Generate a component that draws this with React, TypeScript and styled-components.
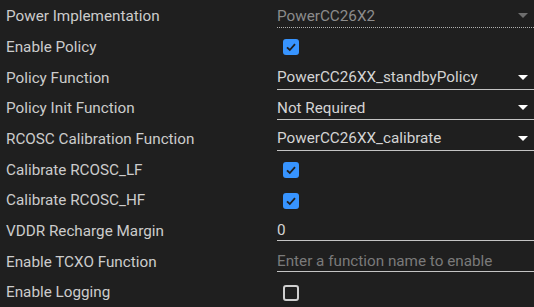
import React from "react";
import styled, { createGlobalStyle } from "styled-components";

const GlobalStyle = createGlobalStyle`
	html, body {
		margin: 0;
		padding: 0;
		background: #1f1f1f;
		overflow: hidden;
	}
	body {
		font-family: Roboto, "Liberation Sans", sans-serif;
	}
`;

const Panel = styled.div`
	width: 534px;
	height: 307px;
	padding-top: 1px;
	box-sizing: border-box;
	background: #1f1f1f;
	color: #cccccc;
`;

const Row = styled.div`
	display: grid;
	grid-template-columns: 277px 1fr;
	align-items: center;
	height: 30.67px;
`;

const Label = styled.div`
	padding-left: 6px;
	font-size: 15.25px;
	white-space: nowrap;
`;

const Select = styled.div<{ $disabled?: boolean }>`
	display: flex;
	align-items: center;
	justify-content: space-between;
	height: 24px;
	box-sizing: border-box;
	padding-right: 6px;
	border-bottom: 1px ${(p) => (p.$disabled ? "dotted #b0b0b0" : "solid #c4c4c4")};
	font-size: 15.25px;
	color: ${(p) => (p.$disabled ? "#8c8c8c" : "#d4d4d4")};
`;

const Arrow = styled.span<{ $disabled?: boolean }>`
	width: 0;
	height: 0;
	border-left: 5px solid transparent;
	border-right: 5px solid transparent;
	border-top: 5px solid ${(p) => (p.$disabled ? "#6e6e6e" : "#ffffff")};
`;

const TextInput = styled.input`
	display: block;
	width: 100%;
	height: 20px;
	box-sizing: border-box;
	margin: 0;
	padding: 0;
	background: transparent;
	border: none;
	border-bottom: 1px solid #c4c4c4;
	outline: none;
	font-family: Roboto, "Liberation Sans", sans-serif;
	font-size: 15.25px;
	color: #d4d4d4;

	&::placeholder {
		color: #7a7a7a;
	}
`;

const Box = styled.span<{ $checked?: boolean }>`
	display: flex;
	align-items: center;
	justify-content: center;
	width: 16px;
	height: 16px;
	margin-left: 6px;
	margin-top: 1px;
	box-sizing: border-box;
	border-radius: 3px;
	background: ${(p) => (p.$checked ? "#3794ff" : "transparent")};
	border: ${(p) => (p.$checked ? "none" : "2px solid #cfcfcf")};
`;

const Checkbox = ({ checked }: { checked?: boolean }) => (
	<Box $checked={checked}>
		{checked && (
			<svg width="12" height="12" viewBox="0 0 12 12">
				<path d="M2 6.3 L4.8 9 L10 3.2" fill="none" stroke="#1f1f1f" strokeWidth="1.8" />
			</svg>
		)}
	</Box>
);

type Field =
	| { label: string; kind: "select"; value: string; disabled?: boolean }
	| { label: string; kind: "check"; checked: boolean }
	| { label: string; kind: "text"; value?: string; placeholder?: string };

const fields: Field[] = [
	{ label: "Power Implementation", kind: "select", value: "PowerCC26X2", disabled: true },
	{ label: "Enable Policy", kind: "check", checked: true },
	{ label: "Policy Function", kind: "select", value: "PowerCC26XX_standbyPolicy" },
	{ label: "Policy Init Function", kind: "select", value: "Not Required" },
	{ label: "RCOSC Calibration Function", kind: "select", value: "PowerCC26XX_calibrate" },
	{ label: "Calibrate RCOSC_LF", kind: "check", checked: true },
	{ label: "Calibrate RCOSC_HF", kind: "check", checked: true },
	{ label: "VDDR Recharge Margin", kind: "text", value: "0" },
	{ label: "Enable TCXO Function", kind: "text", placeholder: "Enter a function name to enable" },
	{ label: "Enable Logging", kind: "check", checked: false },
];

const App: React.FC = () => {
	return (
		<>
			<GlobalStyle />
			<Panel>
				{fields.map((f) => (
					<Row key={f.label}>
						<Label>{f.label}</Label>
						<div>
							{f.kind === "select" && (
								<Select $disabled={f.disabled}>
									<span>{f.value}</span>
									<Arrow $disabled={f.disabled} />
								</Select>
							)}
							{f.kind === "check" && <Checkbox checked={f.checked} />}
							{f.kind === "text" && (
								<TextInput defaultValue={f.value} placeholder={f.placeholder} />
							)}
						</div>
					</Row>
				))}
			</Panel>
		</>
	);
};

export default App;
